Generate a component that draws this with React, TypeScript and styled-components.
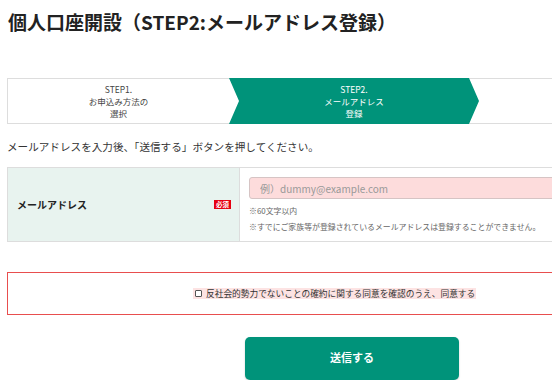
import React from "react";
import styled, { createGlobalStyle } from "styled-components";

const GREEN = "#00937a";

const Global = createGlobalStyle`
  html, body { margin: 0; padding: 0; overflow: hidden; background: #fff; }
  body { font-family: "Noto Sans CJK JP", "Noto Sans", sans-serif; color: #333; }
  * { box-sizing: border-box; }
`;

const Page = styled.div`
  width: 690px;
  margin-left: 7px;
  padding-top: 9px;
`;

const Title = styled.h1`
  margin: 0 0 0 1px;
  font-size: 19px;
  line-height: 26px;
  font-weight: 700;
  color: #222;
`;

const StepBar = styled.div`
  margin-top: 43px;
  display: flex;
  height: 46px;
  border-top: 1px solid #ddd;
  border-bottom: 1px solid #ddd;
  border-left: 1px solid #ddd;
`;

const Step = styled.div<{ $active?: boolean; $width?: number }>`
  flex: ${(p) => (p.$width ? `0 0 ${p.$width}px` : "1 1 auto")};
  display: flex;
  flex-direction: column;
  align-items: center;
  justify-content: center;
  font-size: 8.5px;
  line-height: 12px;
  text-align: center;
  color: ${(p) => (p.$active ? "#fff" : "#444")};
  background: ${(p) => (p.$active ? GREEN : "#fff")};
  margin: ${(p) => (p.$active ? "-1px 0" : "0")};
  clip-path: ${(p) =>
    p.$active
      ? "polygon(0 0, calc(100% - 10px) 0, 100% 50%, calc(100% - 10px) 100%, 0 100%, 10px 50%)"
      : "none"};
`;

const Lead = styled.p`
  margin: 16px 0 0 0;
  font-size: 10.6px;
  line-height: 14px;
  color: #333;
`;

const FormTable = styled.div`
  margin-top: 13px;
  display: grid;
  grid-template-columns: 232px 1fr;
  border: 1px solid #ddd;
`;

const HeadCell = styled.div`
  background: #e8f3ef;
  border-right: 1px solid #ddd;
  display: flex;
  align-items: center;
  justify-content: space-between;
  padding: 0 8px 0 9px;
`;

const Label = styled.span`
  font-size: 10px;
  font-weight: 700;
  color: #222;
`;

const Badge = styled.span`
  background: #e60012;
  color: #fff;
  font-size: 6.5px;
  font-weight: 700;
  line-height: 9px;
  height: 9px;
  padding: 0 2px;
  white-space: nowrap;
  display: inline-flex;
  align-items: center;
  margin-top: -1px;
`;

const BodyCell = styled.div`
  padding: 9px 0 6px 9px;
`;

const Input = styled.input`
  display: block;
  width: 100%;
  height: 22px;
  background: #fddcdc;
  border: 1px solid #d6c4c4;
  border-radius: 3px;
  padding: 0 10px;
  font-family: inherit;
  font-size: 10px;
  color: #333;
  outline: none;
  &::placeholder { color: #999; }
`;

const Note = styled.p<{ $first?: boolean }>`
  margin: ${(p) => (p.$first ? "4px 0 0" : "0")};
  font-size: 7.9px;
  line-height: 16px;
  color: #666;
`;

const AgreeBox = styled.div`
  margin-top: 30px;
  height: 43px;
  border: 1px solid #e84e4e;
  display: flex;
  align-items: center;
  padding-left: 185px;
`;

const AgreeLabel = styled.label`
  display: inline-flex;
  align-items: center;
  gap: 4px;
  background: #fde3e3;
  padding: 0 1px 0 2px;
  font-size: 8.7px;
  line-height: 11px;
  color: #333;
`;

const Check = styled.span`
  width: 7px;
  height: 7px;
  border: 1px solid #555;
  border-radius: 1px;
  background: #fff;
  display: inline-block;
`;

const ButtonRow = styled.div`
  margin-top: 22px;
  display: flex;
  justify-content: center;
`;

const Submit = styled.button`
  width: 214px;
  height: 43px;
  border: none;
  border-radius: 5px;
  background: ${GREEN};
  color: #fff;
  font-family: inherit;
  font-size: 11px;
  line-height: 14px;
  font-weight: 700;
  padding: 0 0 3px;
  box-shadow: 0 1px 2px rgba(0, 0, 0, 0.2);
`;

export default function App() {
  return (
    <>
      <Global />
      <Page>
        <Title>個人口座開設（STEP2:メールアドレス登録）</Title>
        <StepBar>
          <Step $width={221}>
            <span>STEP1.</span>
            <span>お申込み方法の</span>
            <span>選択</span>
          </Step>
          <Step $active $width={250}>
            <span>STEP2.</span>
            <span>メールアドレス</span>
            <span>登録</span>
          </Step>
          <Step />
        </StepBar>
        <Lead>メールアドレスを入力後、「送信する」ボタンを押してください。</Lead>
        <FormTable>
          <HeadCell>
            <Label>メールアドレス</Label>
            <Badge>必須</Badge>
          </HeadCell>
          <BodyCell>
            <Input placeholder="例）dummy@example.com" />
            <Note $first>※60文字以内</Note>
            <Note>※すでにご家族等が登録されているメールアドレスは登録することができません。</Note>
          </BodyCell>
        </FormTable>
        <AgreeBox>
          <AgreeLabel>
            <Check />
            反社会的勢力でないことの確約に関する同意を確認のうえ、同意する
          </AgreeLabel>
        </AgreeBox>
        <ButtonRow>
          <Submit>送信する</Submit>
        </ButtonRow>
      </Page>
    </>
  );
}
